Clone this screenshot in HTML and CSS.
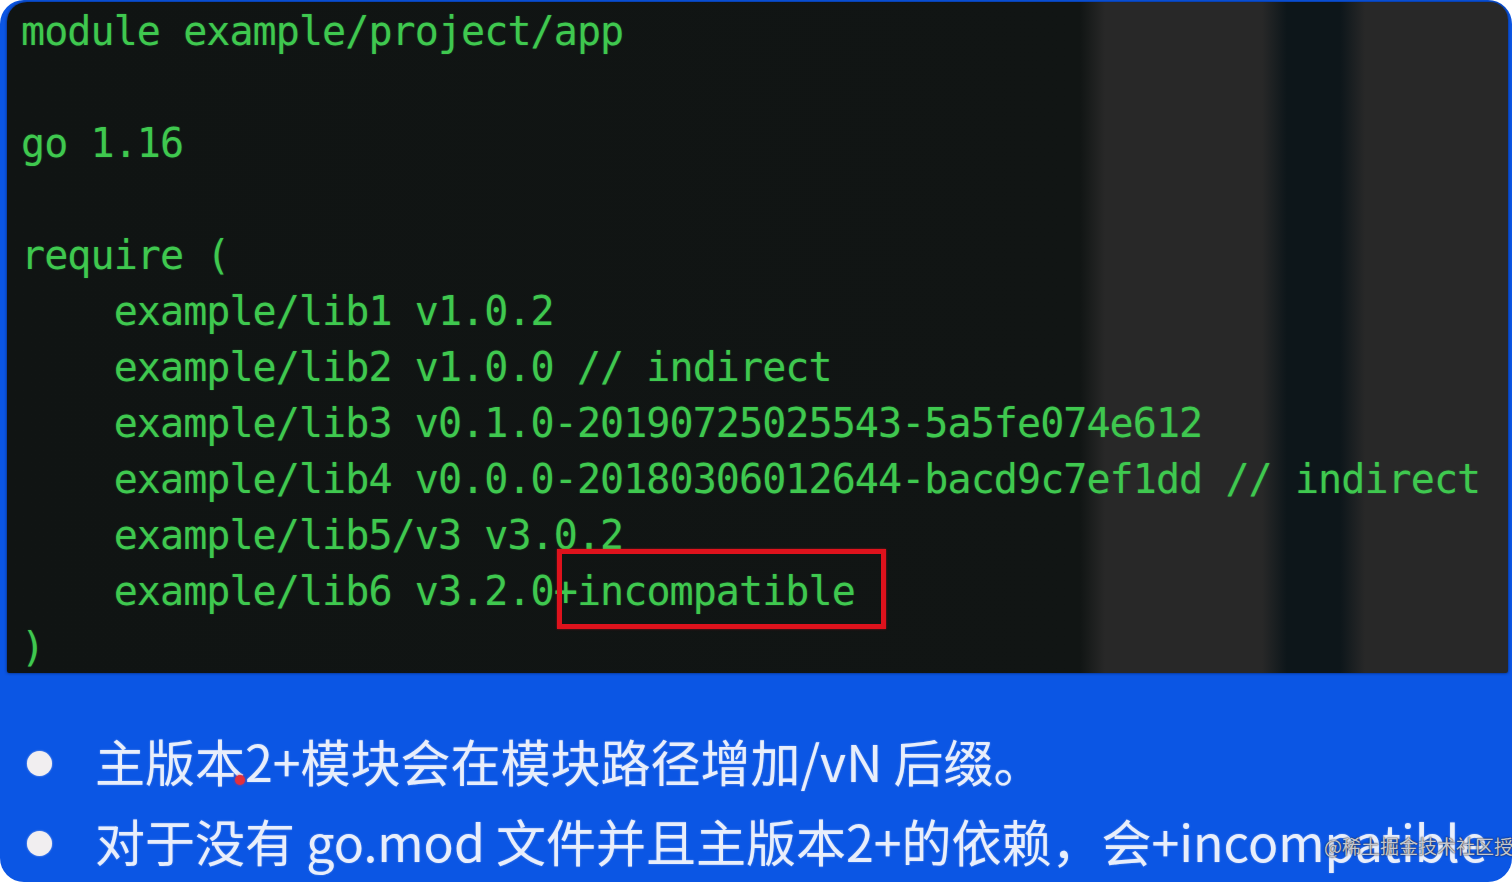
FILE: index.html
```html
<!DOCTYPE html>
<html lang="zh-CN">
<head>
<meta charset="utf-8">
<title>go.mod incompatible</title>
<link rel="stylesheet" href="styles.css">
</head>
<body>
<div class="frame">
  <div class="code-panel">
<pre class="code">module example/project/app

go 1.16

require (
    example/lib1 v1.0.2
    example/lib2 v1.0.0 // indirect
    example/lib3 v0.1.0-20190725025543-5a5fe074e612
    example/lib4 v0.0.0-20180306012644-bacd9c7ef1dd // indirect
    example/lib5/v3 v3.0.2
    example/lib6 v3.2.0<span class="mark">+incompatible</span>
)</pre>
  </div>
  <ul class="notes">
    <li class="note"><span class="bullet"></span><span class="note-text">主版本2+模块会在模块路径增加/vN 后缀。</span><span class="cursor-dot"></span></li>
    <li class="note"><span class="bullet"></span><span class="note-text">对于没有 go.mod 文件并且主版本2+的依赖，会+incompatible</span></li>
  </ul>
  <div class="watermark">@稀土掘金技术社区授权</div>
</div>
</body>
</html>
```
FILE: styles.css
```css
html, body {
  margin: 0;
  padding: 0;
  background: #ffffff;
}

.frame {
  position: relative;
  width: 1512px;
  height: 882px;
  border-radius: 24px;
  overflow: hidden;
  background: #0b56e4;
  display: flex;
  flex-direction: column;
}

.code-panel {
  margin: 2px 4px 0 7px;
  height: 671px;
  flex: none;
  border-radius: 20px 18px 2px 2px;
  background: linear-gradient(to right,
    #101413 0px, #111514 1073px,
    #282828 1098px, #282828 1255px,
    #0d161a 1280px, #0d161a 1333px,
    #282828 1358px, #282828 100%);
  box-shadow: 0 0 3px rgba(5, 20, 60, 0.8);
  overflow: hidden;
}

.code {
  margin: 0;
  padding: 1px 0 0 14px;
  font-family: "DejaVu Sans Mono", "Liberation Mono", monospace;
  font-size: 40px;
  line-height: 56px;
  letter-spacing: -0.92px;
  color: #3fc84f;
  white-space: pre;
  text-shadow: 0 0 2px rgba(60, 200, 80, 0.35);
}

.mark {
  position: relative;
}

.mark::after {
  content: "";
  position: absolute;
  left: 3px;
  right: -31px;
  top: -19px;
  bottom: -15px;
  border: 5px solid #de121c;
  box-shadow: 0 0 2px rgba(222, 18, 28, 0.6);
}

.notes {
  list-style: none;
  margin: 0;
  padding: 47px 0 0 27px;
  display: flex;
  flex-direction: column;
}

.note {
  position: relative;
  display: flex;
  align-items: center;
  gap: 43px;
  height: 80px;
  white-space: nowrap;
}

.bullet {
  flex: none;
  width: 25px;
  height: 25px;
  border-radius: 50%;
  background: #f1eef0;
  box-shadow: 0 0 2px rgba(240, 240, 255, 0.7);
  position: relative;
  top: 3px;
}

.note-text {
  font-family: "Noto Sans CJK SC", "Noto Sans", sans-serif;
  font-size: 50px;
  line-height: 80px;
  color: #e8eefb;
  text-shadow: 0 0 2px rgba(220, 230, 255, 0.5);
}

.cursor-dot {
  position: absolute;
  left: 208px;
  top: 55px;
  width: 10px;
  height: 10px;
  border-radius: 50%;
  background: #e0303e;
  box-shadow: 0 0 3px rgba(230, 40, 60, 0.8);
}

.watermark {
  position: absolute;
  left: 1324px;
  top: 834px;
  font-family: "Noto Sans CJK SC", sans-serif;
  font-size: 19px;
  line-height: 24px;
  white-space: nowrap;
  color: rgba(225, 228, 235, 0.85);
  text-shadow: 0 0 2px rgba(40, 40, 50, 0.9), 0 0 1px rgba(40, 40, 50, 0.9);
}
```
